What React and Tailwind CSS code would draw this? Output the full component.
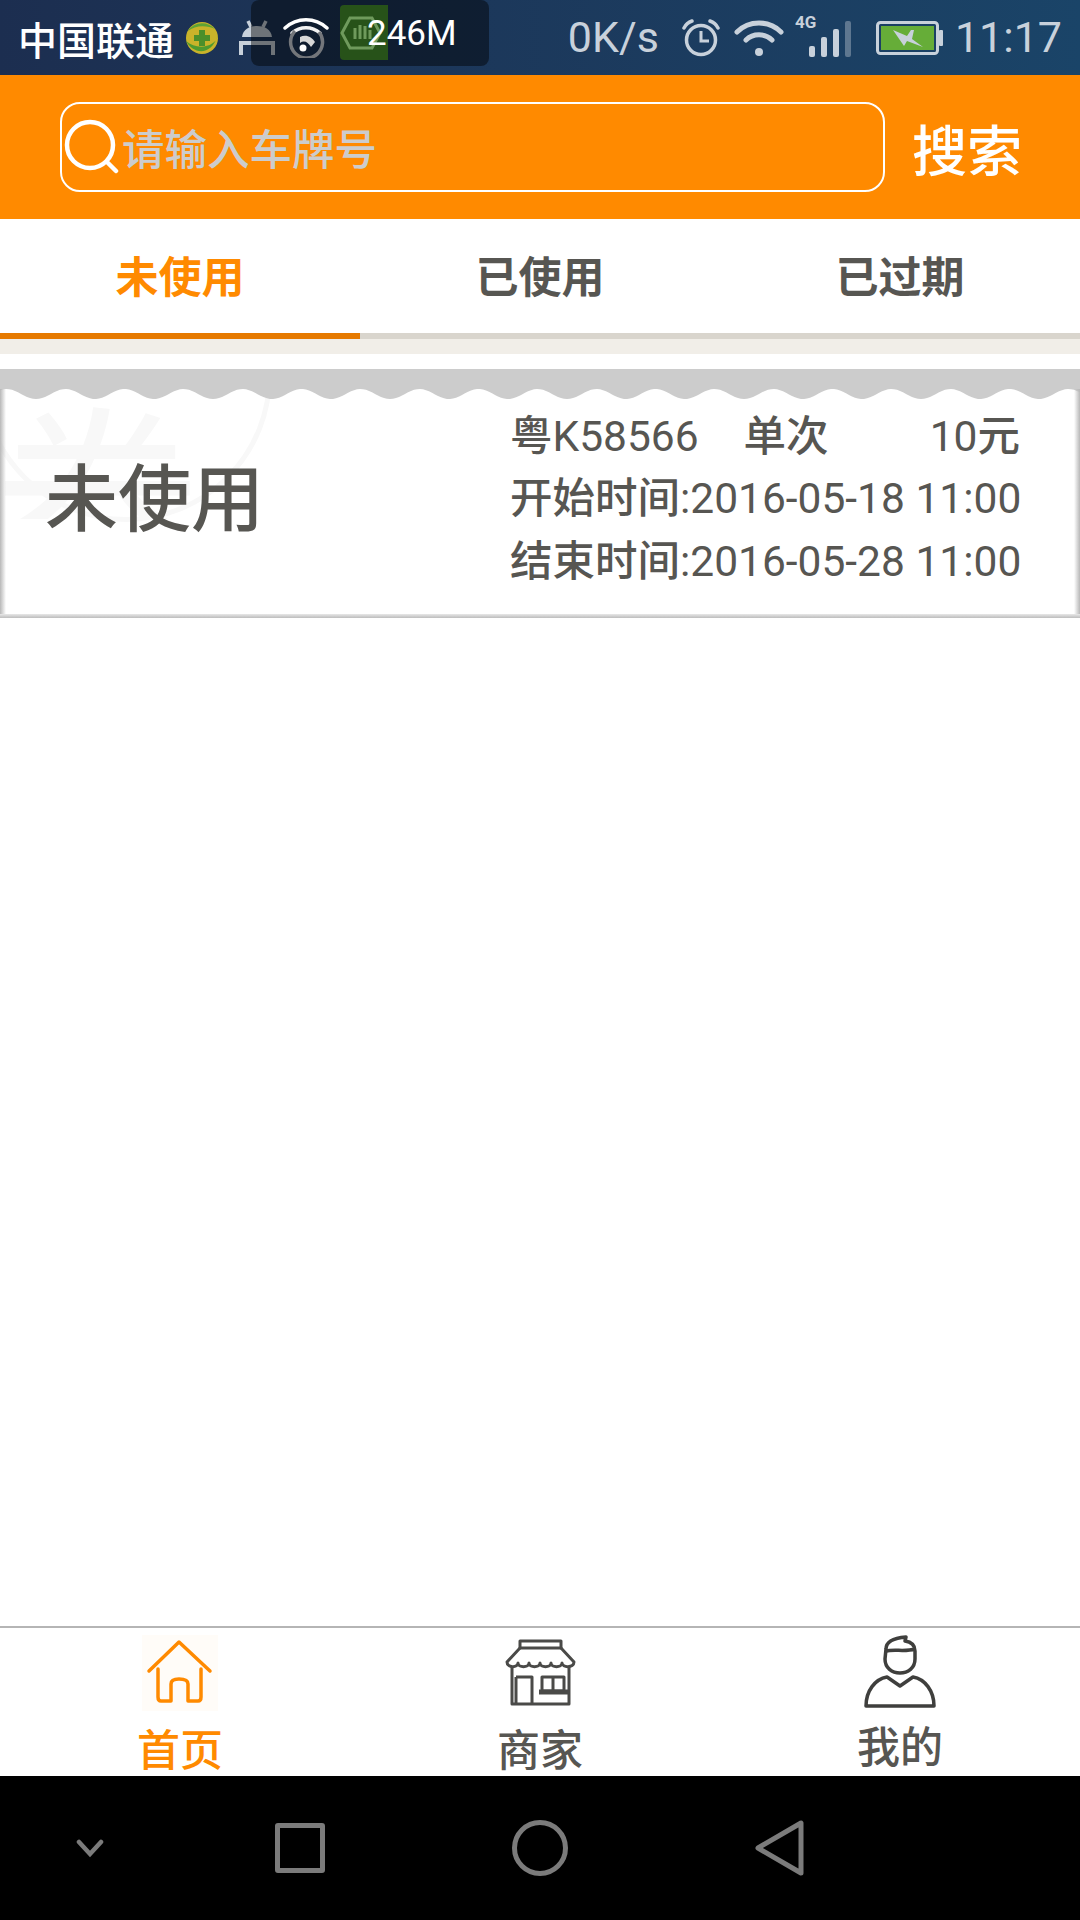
import React from 'react';

// Scalloped lower edge of the ticket's grey top band
const buildScallop = () => {
  let d = 'M0 0 L1080 0';
  for (let x = 1080; x >= 0; x -= 3) {
    const y = 25 - 5 * Math.cos((2 * Math.PI * (x - 6.5)) / 59);
    d += ` L${x} ${y.toFixed(1)}`;
  }
  return d + ' Z';
};

const StatusBar = () => (
  <div className="relative h-[75px] shrink-0 flex items-center bg-gradient-to-r from-[#1c2e50] to-[#1a4468] text-[#c8d1db]">
    <span className="ml-[18px] text-[39px] leading-none font-medium text-white mt-[2px]">中国联通</span>
    {/* 360 icon */}
    <svg className="ml-[11px]" width="34" height="34" viewBox="0 0 34 34">
      <circle cx="17" cy="17" r="16" fill="#c9b32a" />
      <path d="M1 20 C8 33 26 36 33 14 C31 26 12 30 1 20 Z" fill="#4e9a2f" />
      <path d="M3 10 C8 1 22 -1 30 8 C22 4 10 4 3 10 Z" fill="#5fa334" />
      <path d="M14 9 H20 V14 H25 V20 H20 V25 H14 V20 H9 V14 H14 Z" fill="#4b8f2a" />
    </svg>
    {/* Android icon */}
    <svg className="ml-[20px]" width="36" height="38" viewBox="0 0 36 38" fill="none" stroke="#c8d1db" strokeWidth="3.5">
      <path d="M9 2 L12 8 M27 2 L24 8" />
      <path d="M3 18 C4 10 11 7 18 7 C25 7 32 10 33 18 Z" fill="#c8d1db" stroke="none" />
      <path d="M2 36 V24 H34 V36" strokeWidth="4" />
    </svg>
    <div className="ml-auto mr-[18px] flex items-center">
      <span className="text-[43px] leading-none font-['Roboto',sans-serif] mr-[23px]">0K/s</span>
      {/* Alarm */}
      <svg width="38" height="38" viewBox="0 0 38 38" fill="none" stroke="#c8d1db" strokeWidth="3.5">
        <circle cx="19" cy="21" r="14.5" />
        <path d="M19 12 V22 H27" strokeWidth="3" />
        <path d="M2 9 C4 5 7 3 10 2 M36 9 C34 5 31 3 28 2" strokeLinecap="round" />
      </svg>
      {/* Wifi */}
      <svg className="ml-[14px]" width="50" height="38" viewBox="0 0 50 38" fill="none" stroke="#c8d1db" strokeWidth="5" strokeLinecap="round">
        <path d="M3 13 C15 1 35 1 47 13" />
        <path d="M12 21 C19 14 31 14 38 21" />
        <circle cx="25" cy="33" r="4" fill="#c8d1db" stroke="none" />
      </svg>
      {/* 4G signal */}
      <svg className="ml-[10px] mb-[4px]" width="60" height="44" viewBox="0 0 60 44">
        <text x="1" y="14" fontSize="17" fontWeight="700" fontFamily="Roboto, sans-serif" fill="#c8d1db">4G</text>
        <rect x="15" y="32" width="6" height="11" rx="2" fill="#c8d1db" />
        <rect x="27" y="23" width="6" height="20" rx="2" fill="#c8d1db" />
        <rect x="39" y="15" width="6" height="28" rx="2" fill="#c8d1db" />
        <rect x="51" y="7" width="6" height="36" rx="2" fill="#5e7790" />
      </svg>
      {/* Battery */}
      <svg className="ml-[22px]" width="68" height="34" viewBox="0 0 68 34">
        <rect x="1.5" y="1.5" width="60" height="31" rx="3" fill="none" stroke="#c8d1db" strokeWidth="3" />
        <rect x="5" y="5" width="53" height="24" fill="#66ad38" />
        <rect x="63" y="9" width="4" height="16" rx="1" fill="#c8d1db" />
        <path d="M17 9 L31 15 L35 9 L38 9 L36 18 L47 26 L31 20 L28 25 Z" fill="#c8d1db" />
      </svg>
      <span className="ml-[11px] text-[43px] leading-none font-['Roboto',sans-serif]">11:17</span>
    </div>
    {/* Floating memory widget sits over the status icons */}
    <div className="absolute left-[251px] top-0 w-[238px] h-[66px] rounded-lg bg-black/45">
      {/* Wifi with blocked badge */}
      <svg className="absolute left-[32px] top-[18px]" width="46" height="40" viewBox="0 0 46 40" fill="none">
        <path d="M2 10 C14 -1 32 -1 44 10" stroke="#fff" strokeWidth="3.5" strokeLinecap="round" />
        <path d="M9 15 C17 8 29 8 37 15" stroke="#f2f2f2" strokeWidth="3.5" strokeLinecap="round" />
        <path d="M36 14 A16 16 0 1 1 12 13" stroke="#73767b" strokeWidth="3.5" />
        <path d="M17 19 C23 16 29 19 32 24 L28 29 C25 24 21 22 17 25 Z" fill="#d8d8d8" />
        <circle cx="20" cy="30" r="3.5" fill="#fff" />
      </svg>
      <div className="absolute left-[89px] top-[5px] w-[48px] h-[55px] rounded-l bg-[#275219] flex items-center justify-center">
        <svg width="42" height="36" viewBox="0 0 42 36" fill="none" stroke="#6f9a5c" strokeWidth="3" className="-ml-[6px]">
          <path d="M10 3 H32 L40 18 L32 33 H10 L2 18 Z" />
          <path d="M15 24 V13 M20 24 V10 M25 24 V11 M30 24 V15" strokeWidth="3" />
        </svg>
      </div>
      <span className="absolute left-[116px] top-[14px] text-[35px] leading-[40px] text-white font-['Roboto',sans-serif]">246M</span>
    </div>
  </div>
);

const SearchBar = () => (
  <div className="h-[144px] shrink-0 bg-[#ff8a00] flex items-center pl-[60px]">
    <div className="w-[825px] h-[90px] border-2 border-white rounded-[20px] flex items-center">
      <svg className="ml-[1px]" width="56" height="56" viewBox="0 0 56 56" fill="none" stroke="#fff" strokeWidth="4.5" strokeLinecap="round">
        <circle cx="27" cy="26" r="23" />
        <path d="M45 44 L53 52" />
      </svg>
      <span className="ml-[3px] mt-[1px] text-[42.5px] leading-none font-medium text-[#cccccc]">请输入车牌号</span>
    </div>
    <span className="ml-[27px] text-[55px] leading-none font-medium text-white">搜索</span>
  </div>
);

const tabs = ['未使用', '已使用', '已过期'];

const Tabs = () => (
  <div className="shrink-0">
    <div className="flex">
      {tabs.map((t, i) => (
        <div
          key={t}
          className={`w-[360px] h-[120px] pb-[3px] border-b-[6px] flex items-center justify-center text-[43px] font-bold ${
            i === 0 ? 'border-[#e67a00] text-[#ff8a00]' : 'border-[#d9d5cd] text-[#575652]'
          }`}
        >
          {t}
        </div>
      ))}
    </div>
    <div className="h-[15px] bg-[#f1eee8]" />
  </div>
);

const Ticket = () => (
  <div className="relative mt-[15px] shrink-0 h-[249px] overflow-hidden flex flex-col">
    {/* Faint watermark behind the ticket text */}
    <div className="absolute left-0 top-[25px] w-[230px] h-[125px] overflow-hidden">
      <div className="-mt-[6px] -ml-[8px] text-[210px] leading-none text-[#f8f8f8]">券</div>
    </div>
    <div className="absolute -left-[20px] -top-[139px] w-[292px] h-[292px] rounded-full border-[5px] border-[#f8f8f8]" />
    <svg className="relative shrink-0" width="1080" height="30" viewBox="0 0 1080 30">
      <path d={buildScallop()} fill="#cccccc" />
    </svg>
    <div className="relative flex-1 flex">
      <div className="w-[6px] -mt-[10px] bg-gradient-to-r from-[#b8b8b8] to-transparent" />
      <div className="flex-1 flex items-center justify-between pl-[39px] pr-[54px] pb-[18px] text-[#575652]">
        <span className="mb-[12px] text-[73px] leading-none font-medium">未使用</span>
        <div className="w-[510px] whitespace-nowrap text-[42.5px] leading-[62.5px] font-['Roboto','Noto_Sans_CJK_SC',sans-serif]">
          <div className="flex">
            <span><span className="font-medium">粤</span>K58566</span>
            <span className="ml-[45px] font-medium">单次</span>
            <span className="ml-auto">10<span className="font-medium">元</span></span>
          </div>
          <div><span className="font-medium">开始时间</span>:2016-05-18 11:00</div>
          <div><span className="font-medium">结束时间</span>:2016-05-28 11:00</div>
        </div>
      </div>
      <div className="w-[6px] -mt-[10px] bg-gradient-to-l from-[#b8b8b8] to-transparent" />
      <div className="absolute left-0 right-0 bottom-0 h-[4px] bg-gradient-to-b from-[#e8e8e8] to-[#bdbdbd]" />
    </div>
  </div>
);

const HomeIcon = () => (
  <svg width="76" height="76" viewBox="0 0 76 76" fill="none" stroke="#ff8a00" strokeWidth="3.5" strokeLinecap="round" strokeLinejoin="round" className="bg-[#fffcf8]">
    <path d="M7 36 L37 7 L68 36" />
    <path d="M16 34 V62 Q16 66 19 66 H29 V49 Q29 44 37 44 Q46 44 46 49 V66 H56 Q59 66 59 62 V34" />
  </svg>
);

const StoreIcon = () => (
  <svg width="76" height="76" viewBox="0 0 76 76" fill="none" stroke="#4a4a48" strokeWidth="3" strokeLinejoin="round">
    <path d="M18 6 V13 H59 V6 Z" />
    <path d="M18 13 L5 27 C5 33 16 33 16 28 C16 33 27 33 27 28 C27 33 38 33 38 28 C38 33 49 33 49 28 C49 33 60 33 60 28 C60 33 72 33 72 27 L59 13" />
    <path d="M10 32 V69 H67 V32" />
    <path d="M14 42 H30 V69 M14 42 V69" />
    <path d="M40 42 H62 V56 H40 Z M51 42 V56" />
    <path d="M37 57 H66" strokeWidth="5" />
  </svg>
);

const PersonIcon = () => (
  <svg width="76" height="76" viewBox="0 0 76 76" fill="none" stroke="#3f3f3d" strokeWidth="3.5" strokeLinejoin="round">
    <path d="M24 14 C24 6 32 3 44 2 L43 6 C50 7 53 10 53 16 V24 C53 33 46 38 38 38 C30 38 23 33 23 24 Z" />
    <path d="M24 16 C32 14 44 17 53 14" />
    <path d="M25 42 L38 51 L51 42 C63 44 72 56 72 71 H4 C4 56 13 44 25 42 Z" />
  </svg>
);

const BottomNav = () => (
  <div className="h-[150px] shrink-0 border-t-2 border-[#b5b5b5] flex bg-white text-[#575652]">
    <div className="w-[360px] flex flex-col items-center pt-[7px] text-[#ff8a00]">
      <HomeIcon />
      <span className="text-[43px] leading-[50px] mt-[11px] font-medium">首页</span>
    </div>
    <div className="w-[360px] flex flex-col items-center pt-[7px]">
      <StoreIcon />
      <span className="text-[43px] leading-[50px] mt-[11px] font-medium">商家</span>
    </div>
    <div className="w-[360px] flex flex-col items-center pt-[7px]">
      <PersonIcon />
      <span className="text-[43px] leading-[50px] mt-[8px] font-medium">我的</span>
    </div>
  </div>
);

const SystemNav = () => (
  <div className="h-[144px] shrink-0 bg-black flex items-center pl-[76px]">
    <svg width="28" height="20" viewBox="0 0 28 20" fill="none" stroke="#7b7b7b" strokeWidth="4.5" strokeLinecap="round">
      <path d="M3 4 L14 16 L25 4" />
    </svg>
    <div className="ml-[171px] w-[50px] h-[50px] rounded-[3px] border-[5px] border-[#7b7b7b]" />
    <div className="ml-[187px] w-[56px] h-[56px] rounded-full border-[5px] border-[#7b7b7b]" />
    <svg className="ml-[187px]" width="50" height="56" viewBox="0 0 50 56" fill="none" stroke="#7b7b7b" strokeWidth="5" strokeLinejoin="round">
      <path d="M3 28 L46 3 V53 Z" />
    </svg>
  </div>
);

export default function App() {
  return (
    <div className="w-[1080px] h-[1920px] flex flex-col bg-white overflow-hidden font-['Noto_Sans_CJK_SC','Roboto',sans-serif]">
      <StatusBar />
      <SearchBar />
      <Tabs />
      <Ticket />
      <div className="flex-1" />
      <BottomNav />
      <SystemNav />
    </div>
  );
}
